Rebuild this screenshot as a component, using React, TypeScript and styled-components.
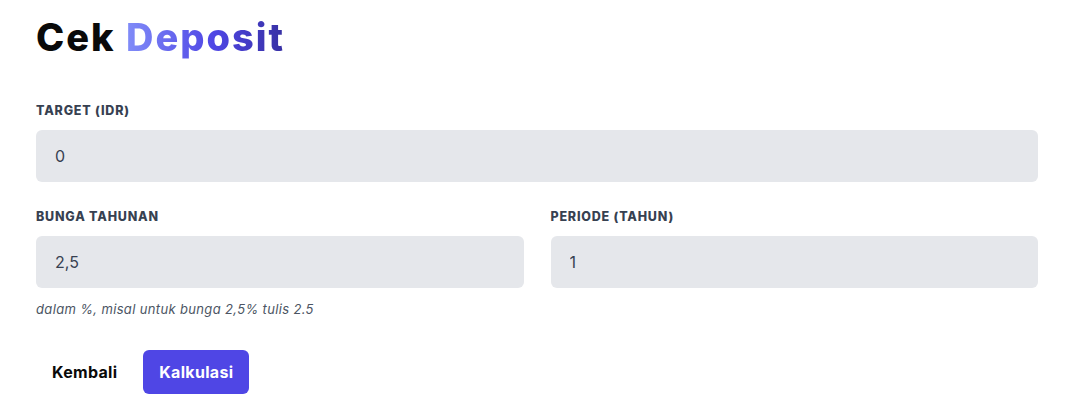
import React from "react";
import styled, { createGlobalStyle } from "styled-components";

const Global = createGlobalStyle`
  html, body { margin: 0; padding: 0; background: #ffffff; }
  body { font-family: "Inter", "Noto Sans", sans-serif; }
  * { box-sizing: border-box; }
`;

const Page = styled.main`
  padding: 14px 27px 0 36px;
  display: flex;
  flex-direction: column;
`;

const Title = styled.h1`
  margin: 0;
  font-size: 38px;
  font-weight: 800;
  line-height: 46px;
  letter-spacing: 2px;
  color: #0a0a0a;
`;

const Gradient = styled.span`
  background: linear-gradient(90deg, #818cf8 0%, #4f46e5 55%, #3730a3 100%);
  -webkit-background-clip: text;
  background-clip: text;
  color: transparent;
`;

const Form = styled.div`
  margin-top: 43px;
  display: flex;
  flex-direction: column;
`;

const Row = styled.div`
  display: grid;
  grid-template-columns: 1fr 1fr;
  column-gap: 27px;
  margin-top: 27px;
`;

const Field = styled.div`
  display: flex;
  flex-direction: column;
`;

const Label = styled.label`
  font-size: 12.5px;
  font-weight: 800;
  line-height: 16px;
  letter-spacing: 0.8px;
  color: #374151;
  text-transform: uppercase;
  margin-bottom: 11px;
`;

const Input = styled.input`
  height: 52px;
  width: 100%;
  border: none;
  outline: none;
  border-radius: 6px;
  background: #e5e7eb;
  padding: 0 19px;
  font-family: inherit;
  font-size: 16px;
  color: #374151;
`;

const Hint = styled.p`
  margin: 12px 0 0;
  font-size: 13px;
  letter-spacing: 0.35px;
  font-style: italic;
  color: #4b5563;
  line-height: 18px;
`;

const Actions = styled.div`
  display: flex;
  gap: 10px;
  margin-top: 32px;
`;

const Button = styled.button<{ $primary?: boolean }>`
  height: 44px;
  padding: 0 16px;
  border: none;
  border-radius: 6px;
  font-family: inherit;
  font-size: 16px;
  letter-spacing: 0.3px;
  font-weight: 700;
  cursor: pointer;
  background: ${(p) => (p.$primary ? "#4f46e5" : "transparent")};
  color: ${(p) => (p.$primary ? "#ffffff" : "#0a0a0a")};
`;

export default function App() {
  return (
    <>
      <Global />
      <Page>
        <Title>
          Cek <Gradient>Deposit</Gradient>
        </Title>
        <Form>
          <Field>
            <Label>Target (IDR)</Label>
            <Input defaultValue="0" />
          </Field>
          <Row>
            <Field>
              <Label>Bunga Tahunan</Label>
              <Input defaultValue="2,5" />
            </Field>
            <Field>
              <Label>Periode (Tahun)</Label>
              <Input defaultValue="1" />
            </Field>
          </Row>
          <Hint>dalam %, misal untuk bunga 2,5% tulis 2.5</Hint>
          <Actions>
            <Button>Kembali</Button>
            <Button $primary>Kalkulasi</Button>
          </Actions>
        </Form>
      </Page>
    </>
  );
}
